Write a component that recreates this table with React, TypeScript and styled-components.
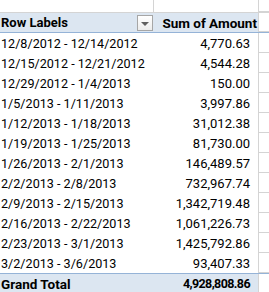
import React from 'react'
import styled, { createGlobalStyle } from 'styled-components'

const rows: [string, string][] = [
    ['12/8/2012 - 12/14/2012', '4,770.63'],
    ['12/15/2012 - 12/21/2012', '4,544.28'],
    ['12/29/2012 - 1/4/2013', '150.00'],
    ['1/5/2013 - 1/11/2013', '3,997.86'],
    ['1/12/2013 - 1/18/2013', '31,012.38'],
    ['1/19/2013 - 1/25/2013', '81,730.00'],
    ['1/26/2013 - 2/1/2013', '146,489.57'],
    ['2/2/2013 - 2/8/2013', '732,967.74'],
    ['2/9/2013 - 2/15/2013', '1,342,719.48'],
    ['2/16/2013 - 2/22/2013', '1,061,226.73'],
    ['2/23/2013 - 3/1/2013', '1,425,792.86'],
    ['3/2/2013 - 3/6/2013', '93,407.33'],
]

const Global = createGlobalStyle`
    body {
        margin: 0;
        background: #fff;
        font-family: 'Roboto', 'Liberation Sans', sans-serif;
        font-size: 13px;
        color: #000;
    }
`

const App: React.FC = () => {
    return (
        <>
            <Global />
            <Sheet>
                <TopRow>
                    <Cell $line />
                    <Cell />
                    <Spare />
                </TopRow>
                <Row $band>
                    <Cell>
                        <HeadText>Row Labels</HeadText>
                        <FilterButton>
                            <Arrow />
                        </FilterButton>
                    </Cell>
                    <Cell $right $pad={1}>
                        <HeadText $wide>Sum of Amount</HeadText>
                    </Cell>
                    <Spare />
                </Row>
                {rows.map(([label, amount]) => (
                    <Row key={label}>
                        <Cell>
                            <Label>{label}</Label>
                        </Cell>
                        <Cell $right>
                            <Amount>{amount}</Amount>
                        </Cell>
                        <Spare />
                    </Row>
                ))}
                <Row $band $total>
                    <Cell>
                        <HeadText $wide>Grand Total</HeadText>
                    </Cell>
                    <Cell $right>
                        <Amount $bold>4,928,808.86</Amount>
                    </Cell>
                    <Spare />
                </Row>
            </Sheet>
        </>
    )
}

const Sheet = styled.div`
    width: 269px;
    display: flex;
    flex-direction: column;
`
const TopRow = styled.div`
    display: grid;
    grid-template-columns: 154px 104px 11px;
    height: 13px;
    border-bottom: 1px solid #d4d4d4;
    box-sizing: border-box;
`
const Row = styled.div<{ $band?: boolean; $total?: boolean }>`
    display: grid;
    grid-template-columns: 154px 104px 11px;
    height: 20px;
    box-sizing: border-box;
    background: ${(p) => (p.$band ? '#dce6f1' : '#fff')};
    border-bottom: ${(p) => (p.$band && !p.$total ? '1px solid #95b3d7' : 'none')};
    border-top: ${(p) => (p.$total ? '1px solid #95b3d7' : 'none')};
`
const Cell = styled.div<{ $right?: boolean; $line?: boolean; $pad?: number }>`
    position: relative;
    display: flex;
    align-items: center;
    justify-content: ${(p) => (p.$right ? 'flex-end' : 'flex-start')};
    padding: ${(p) => (p.$right ? `0 ${p.$pad ?? 8}px 0 0` : '0 0 0 1px')};
    white-space: nowrap;
    border-right: ${(p) => (p.$line ? '1px solid #d4d4d4' : 'none')};
`
const Spare = styled.div`
    background: #fff;
    border-left: 1px solid #d4d4d4;
    border-bottom: 1px solid #d4d4d4;
`
const HeadText = styled.span<{ $wide?: boolean }>`
    font-size: ${(p) => (p.$wide ? '13.5px' : '13px')};
    font-weight: 700;
    color: #000;
`
const Label = styled.span`
    font-size: 12.6px;
`
const Amount = styled.span<{ $bold?: boolean }>`
    font-size: ${(p) => (p.$bold ? '12.5px' : '13px')};
    letter-spacing: ${(p) => (p.$bold ? '-0.6px' : '0')};
    font-weight: ${(p) => (p.$bold ? 700 : 400)};
`
const FilterButton = styled.div`
    position: absolute;
    left: 137px;
    top: 2px;
    width: 14px;
    height: 14px;
    border: 1px solid #a6a6a6;
    background: linear-gradient(#ffffff, #ececec);
    display: flex;
    align-items: center;
    justify-content: center;
`
const Arrow = styled.div`
    width: 0;
    height: 0;
    border-left: 4px solid transparent;
    border-right: 4px solid transparent;
    border-top: 4px solid #5f5f5f;
    margin-top: 1px;
`

export default App
